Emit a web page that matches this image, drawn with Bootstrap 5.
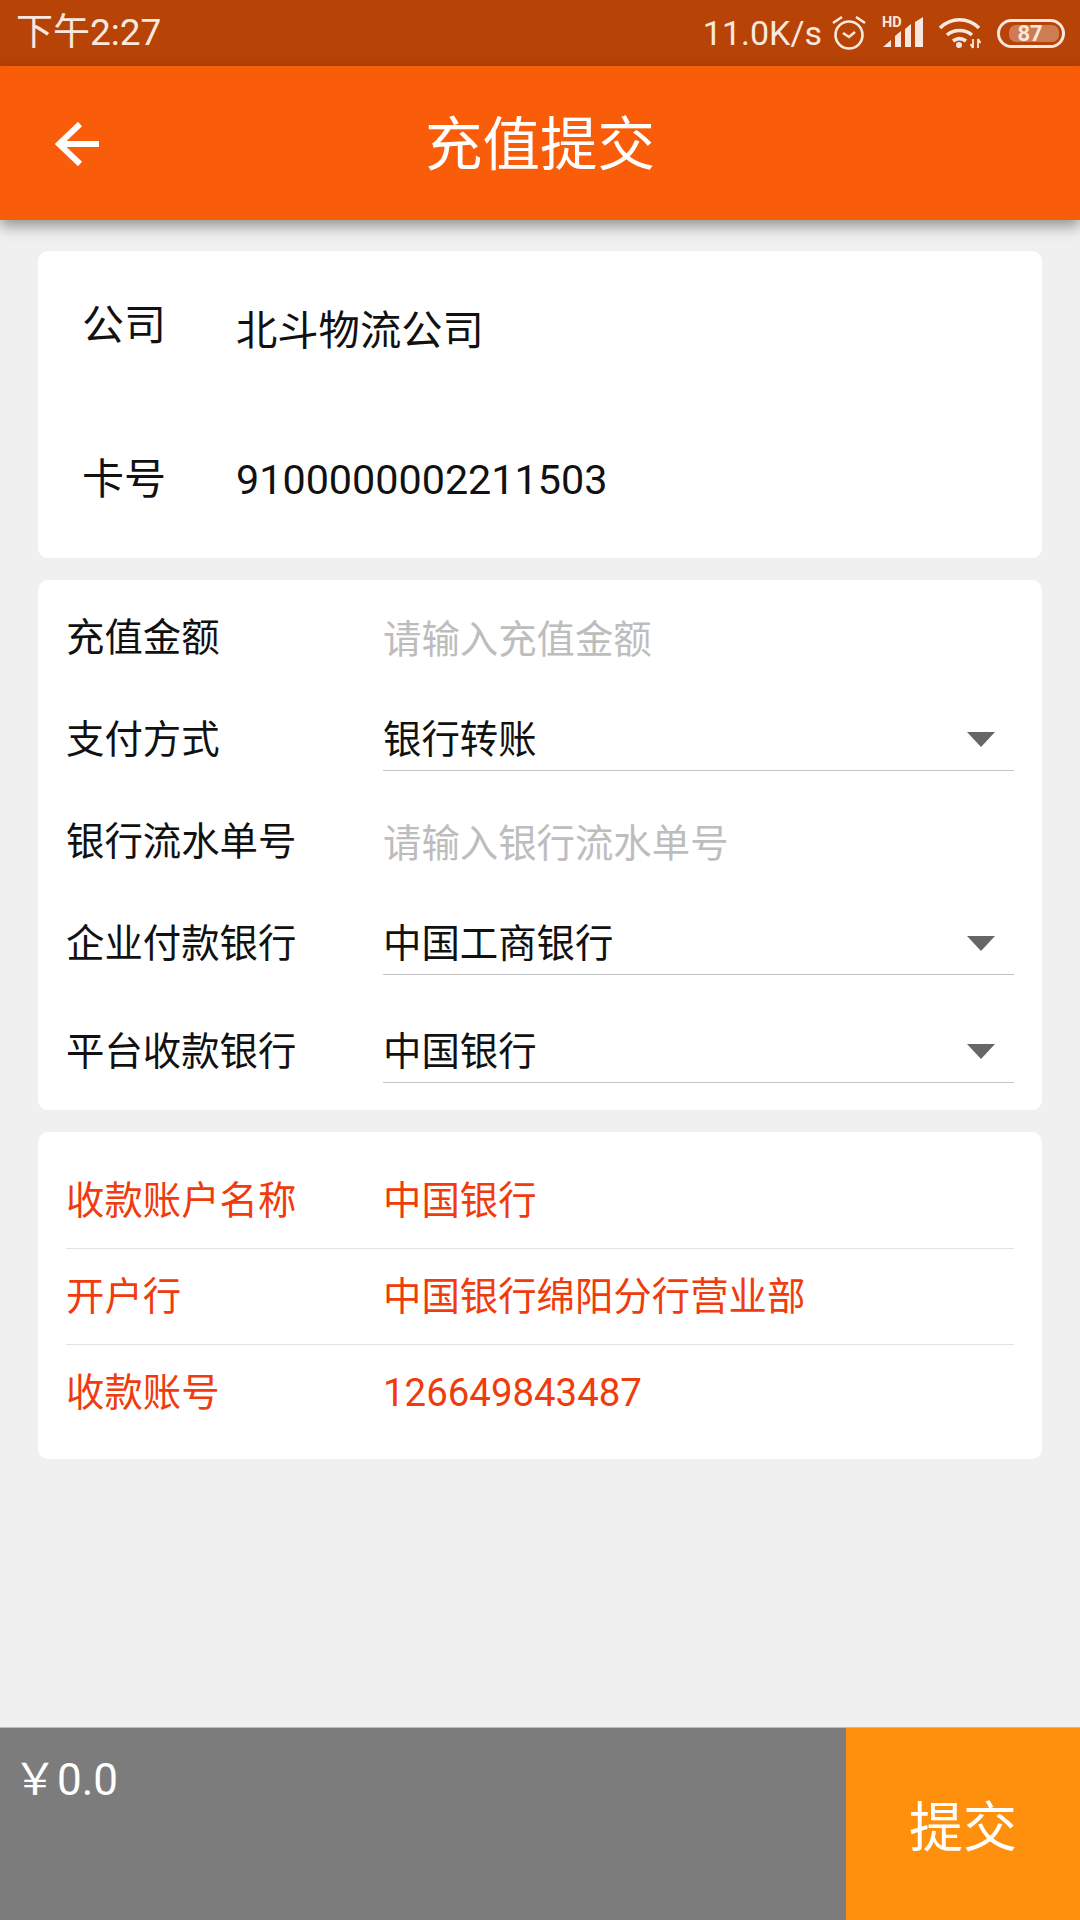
<!DOCTYPE html>
<html lang="zh">
<head>
    <meta charset="UTF-8">
    <meta name="viewport" content="width=device-width, initial-scale=1.0">
    <title>充值提交</title>
    <link href="https://cdn.jsdelivr.net/npm/bootstrap@5.3.0/dist/css/bootstrap.min.css" rel="stylesheet">
    <style>
        body { background: #f0f0f0; font-family: Roboto, "Noto Sans CJK SC", sans-serif; color: #111; }
        .app-page { width: 1080px; height: 1920px; overflow: hidden; }
        .status-row { height: 66px; background: #b74306; color: #f8e8df; font-size: 37px; padding: 0 15px 0 16px; }
        .status-icons { gap: 16px; }
        .status-speed { font-size: 34px; margin-right: 10px; }
        .status-hd { margin-bottom: 5px; }
        .tool-row { height: 154px; padding-top: 5px; background: #f95d0a; color: #fff; box-shadow: 0 6px 14px rgba(0,0,0,.4); z-index: 2; }
        .tool-back { left: 55px; top: 56px; }
        .tool-title { font-size: 57.5px; line-height: 1; }
        .panel-box { background: #fff; border-radius: 10px; margin: 0 38px; }
        .panel-one { margin-top: 31px; height: 307px; padding: 45px 0 0 44px; }
        .panel-two { margin-top: 22px; height: 530px; padding: 33px 28px 0; }
        .panel-three { margin-top: 22px; height: 327px; padding: 21px 28px 0; color: #f03c0c; }
        .firm-row { font-size: 42px; line-height: 60px; }
        .firm-row + .firm-row { margin-top: 89px; }
        .firm-label { width: 154px; }
        .firm-value { font-size: 41.3px; margin-top: 5px; }
        .firm-row + .firm-row .firm-value { margin-top: 0; }
        .form-line { font-size: 38.4px; line-height: 50px; height: 102px; }
        .form-line:last-child { margin-top: 6px; }
        .form-label-col { width: 317px; flex: none; }
        .form-field { flex: 1; display: flex; justify-content: space-between; align-items: flex-start; }
        .field-hint { color: #bdbdbd; margin-top: 2px; }
        .field-under { height: 56px; border-bottom: 1px solid #c4c4c4; }
        .drop-tip { width: 0; height: 0; border-left: 14px solid transparent; border-right: 14px solid transparent; border-top: 15px solid #666; margin: 17px 19px 0 0; }
        .info-line { font-size: 38.4px; line-height: 50px; height: 96px; border-bottom: 1px solid #e4e4e4; }
        .info-line:last-child { border-bottom: 0; }
        .foot-row { height: 193px; margin-top: auto; border-top: 1px solid #bdbdbd; }
        .foot-sum { flex: 1; background: #7c7c7c; color: #fff; font-size: 44px; line-height: 1; padding: 30px 0 0 13px; }
        .foot-btn { width: 234px; background: #ff900e; color: #fff; font-size: 54px; border: 0; border-radius: 0; padding: 8px 0 0; }
    </style>
</head>
<body class="m-0">
    <div class="app-page d-flex flex-column">
        <div class="status-row d-flex justify-content-between align-items-center">
            <span>下午2:27</span>
            <div class="d-flex align-items-center">
                <span class="status-speed">11.0K/s</span>
                <div class="status-icons d-flex align-items-center">
                    <!-- alarm -->
                    <svg width="34" height="34" viewBox="0 0 34 34" fill="none" stroke="#f8e8df" stroke-width="2.6">
                        <circle cx="17" cy="19" r="13.5"/>
                        <path d="M11 17l6 4 6-5M1 7l9-6M33 7l-9-6"/>
                    </svg>
                    <!-- hd signal -->
                    <svg class="status-hd" width="41" height="35" viewBox="0 0 41 35" fill="#f8e8df">
                        <text x="0" y="14" font-size="14.5" font-weight="700" font-family="Roboto">HD</text>
                        <path d="M1 34l8-7v7zM13 34V23l6-5v16zM23 34V16l6-5v23zM33 34V9l8-5v30z"/>
                    </svg>
                    <!-- wifi -->
                    <svg width="42" height="32" viewBox="0 0 42 32" fill="none" stroke="#f8e8df" stroke-width="3.6">
                        <path d="M1 11C12 0 29 0 40 11M8 18c7-6 18-6 25 0M14 24c4-3 9-3 13 0"/>
                        <circle cx="20" cy="28" r="3" fill="#f8e8df" stroke="none"/>
                        <path d="M34 22v9M31.5 27l2.5 4M39 31v-9M41.5 26L39 22" stroke-width="1.8"/>
                    </svg>
                    <!-- battery -->
                    <svg width="68" height="29" viewBox="0 0 68 29">
                        <rect x="1.5" y="1.5" width="65" height="26" rx="13" fill="none" stroke="#f8e8df" stroke-width="3"/>
                        <rect x="12" y="6" width="50" height="17" rx="7" fill="#f8e8df" opacity=".35"/>
                        <text x="33" y="22" text-anchor="middle" font-size="22" font-weight="700" font-family="Roboto" fill="#f8e8df">87</text>
                    </svg>
                </div>
            </div>
        </div>
        <div class="tool-row position-relative d-flex align-items-center justify-content-center">
            <svg class="tool-back position-absolute" width="44" height="44" viewBox="0 0 44 44" fill="none" stroke="#fff" stroke-width="6">
                <path d="M44 22H4M25 2L4 22l21 20"/>
            </svg>
            <span class="tool-title">充值提交</span>
        </div>

        <div class="panel-box panel-one">
            <div class="firm-row d-flex"><span class="firm-label">公司</span><span class="firm-value">北斗物流公司</span></div>
            <div class="firm-row d-flex"><span class="firm-label">卡号</span><span class="firm-value">9100000002211503</span></div>
        </div>

        <div class="panel-box panel-two">
            <div class="form-line d-flex"><span class="form-label-col">充值金额</span><span class="form-field field-hint">请输入充值金额</span></div>
            <div class="form-line d-flex"><span class="form-label-col">支付方式</span><span class="form-field field-under">银行转账<i class="drop-tip"></i></span></div>
            <div class="form-line d-flex"><span class="form-label-col">银行流水单号</span><span class="form-field field-hint">请输入银行流水单号</span></div>
            <div class="form-line d-flex"><span class="form-label-col">企业付款银行</span><span class="form-field field-under">中国工商银行<i class="drop-tip"></i></span></div>
            <div class="form-line d-flex"><span class="form-label-col">平台收款银行</span><span class="form-field field-under">中国银行<i class="drop-tip"></i></span></div>
        </div>

        <div class="panel-box panel-three">
            <div class="info-line d-flex align-items-center"><span class="form-label-col">收款账户名称</span><span>中国银行</span></div>
            <div class="info-line d-flex align-items-center"><span class="form-label-col">开户行</span><span>中国银行绵阳分行营业部</span></div>
            <div class="info-line d-flex align-items-center"><span class="form-label-col">收款账号</span><span>126649843487</span></div>
        </div>

        <div class="foot-row d-flex">
            <div class="foot-sum">&#xFFE5;0.0</div>
            <button class="foot-btn btn" type="button">提交</button>
        </div>
    </div>
</body>
</html>
